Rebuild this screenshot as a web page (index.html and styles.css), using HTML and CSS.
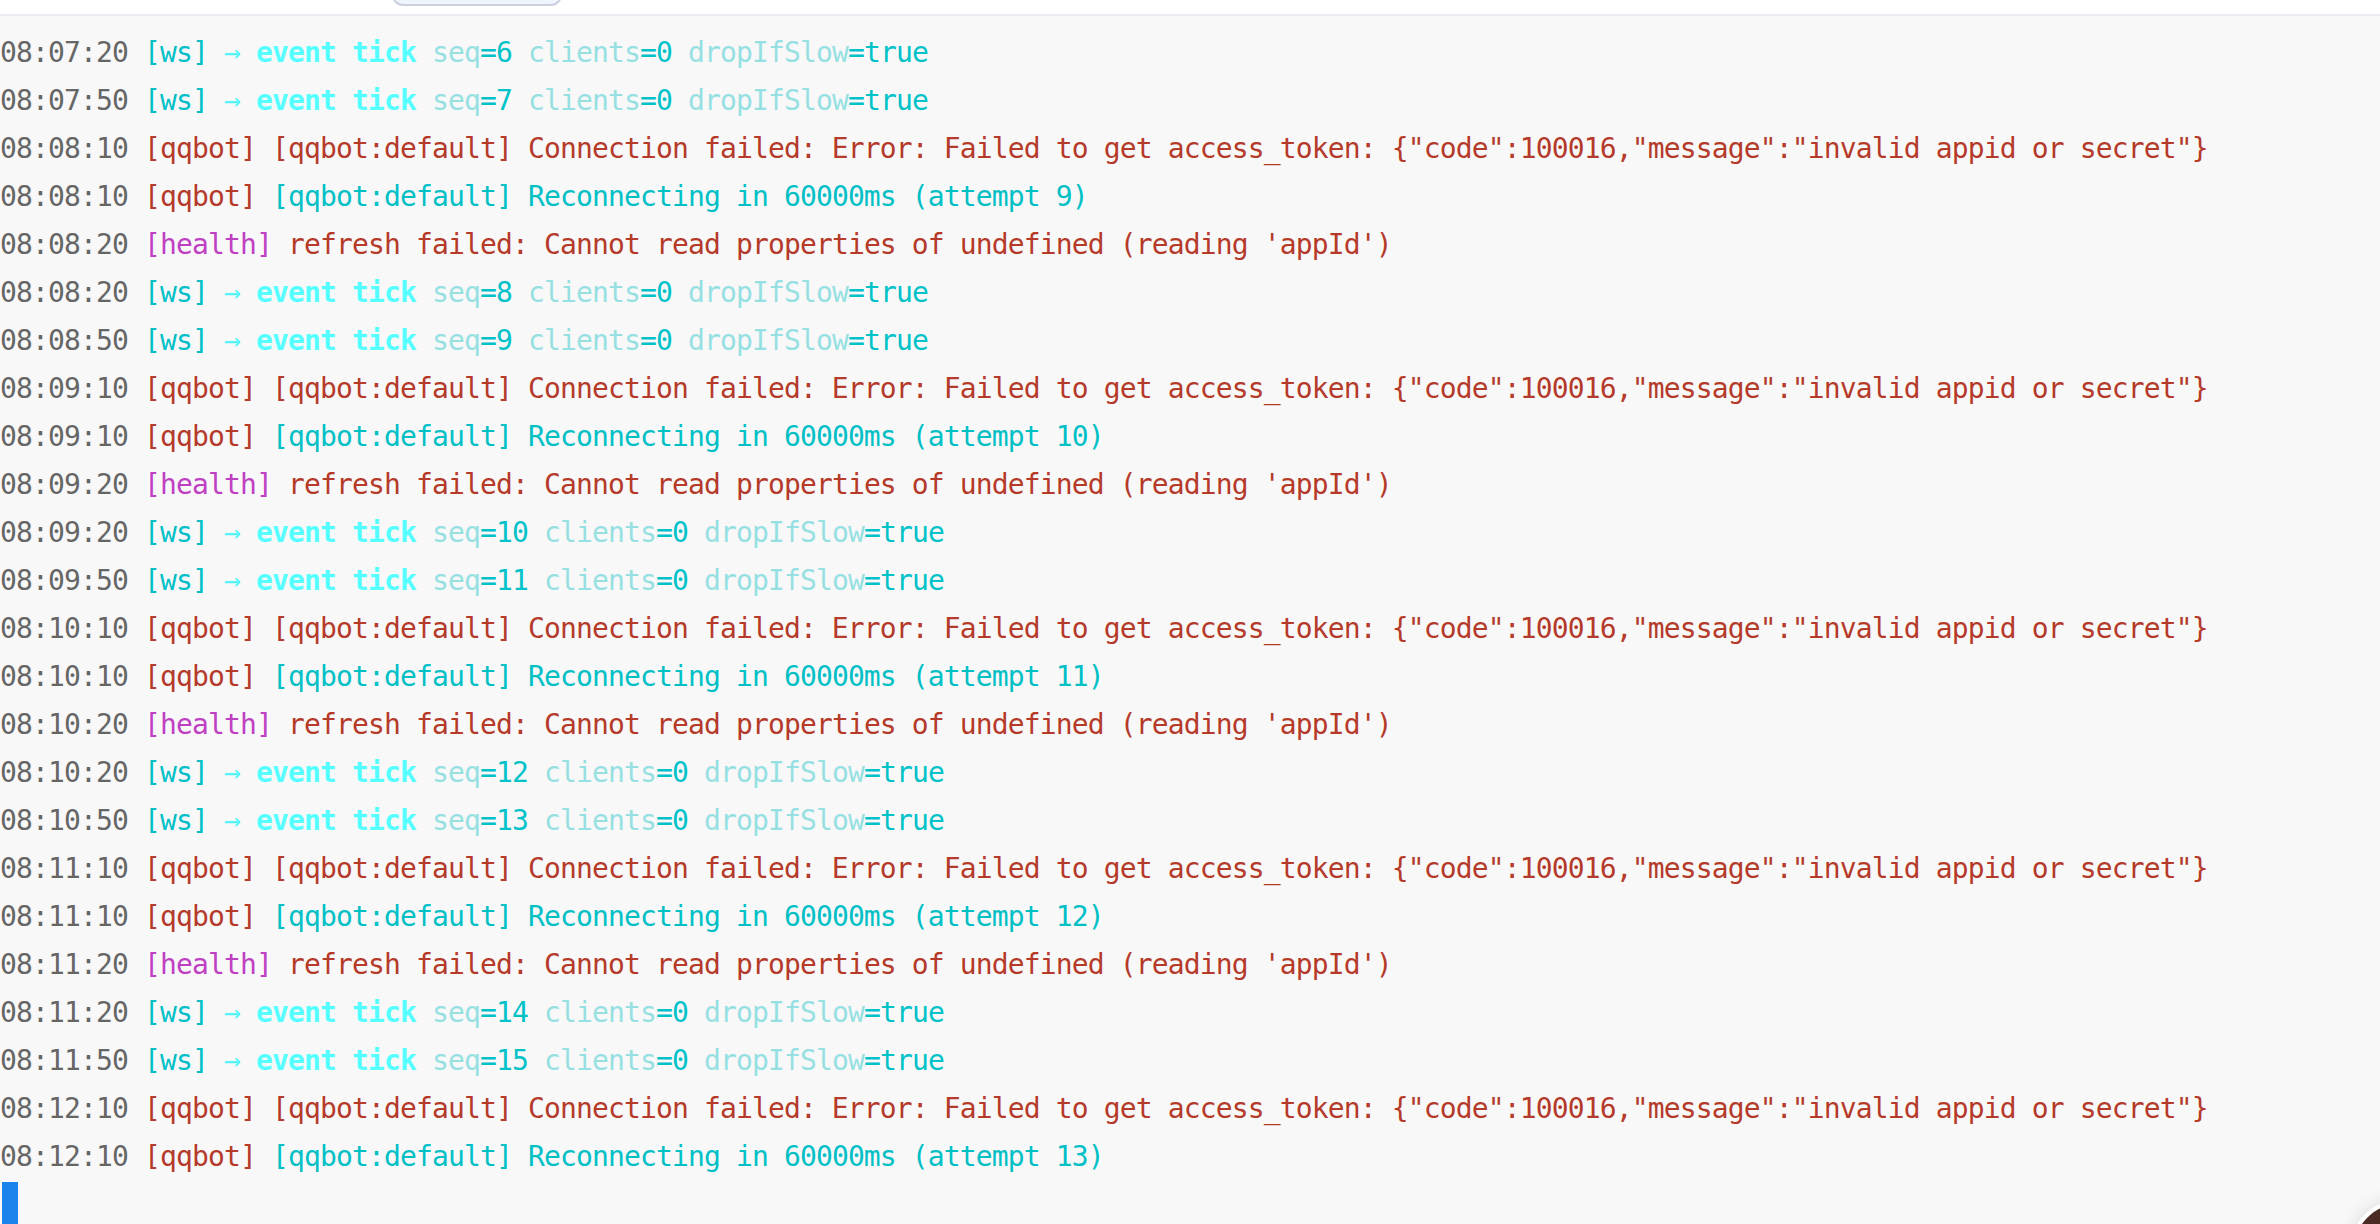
FILE: index.html
```html
<!DOCTYPE html>
<html>
<head>
<meta charset="utf-8">
<link rel="stylesheet" href="styles.css">
</head>
<body>
<div class="topbar"><div class="tab"></div></div>
<div class="log">
<div class="line"><span class="ts">08:07:20</span> <span class="ws">[ws]</span> <span class="arrow">→</span> <span class="ev">event tick</span> <span class="dim">seq</span><span class="val">=6</span> <span class="dim">clients</span><span class="val">=0</span> <span class="dim">dropIfSlow</span><span class="val">=true</span></div>
<div class="line"><span class="ts">08:07:50</span> <span class="ws">[ws]</span> <span class="arrow">→</span> <span class="ev">event tick</span> <span class="dim">seq</span><span class="val">=7</span> <span class="dim">clients</span><span class="val">=0</span> <span class="dim">dropIfSlow</span><span class="val">=true</span></div>
<div class="line"><span class="ts">08:08:10</span> <span class="red">[qqbot] [qqbot:default] Connection failed: Error: Failed to get access_token: {"code":100016,"message":"invalid appid or secret"}</span></div>
<div class="line"><span class="ts">08:08:10</span> <span class="red">[qqbot]</span> <span class="teal">[qqbot:default] Reconnecting in 60000ms (attempt 9)</span></div>
<div class="line"><span class="ts">08:08:20</span> <span class="mag">[health]</span> <span class="red">refresh failed: Cannot read properties of undefined (reading 'appId')</span></div>
<div class="line"><span class="ts">08:08:20</span> <span class="ws">[ws]</span> <span class="arrow">→</span> <span class="ev">event tick</span> <span class="dim">seq</span><span class="val">=8</span> <span class="dim">clients</span><span class="val">=0</span> <span class="dim">dropIfSlow</span><span class="val">=true</span></div>
<div class="line"><span class="ts">08:08:50</span> <span class="ws">[ws]</span> <span class="arrow">→</span> <span class="ev">event tick</span> <span class="dim">seq</span><span class="val">=9</span> <span class="dim">clients</span><span class="val">=0</span> <span class="dim">dropIfSlow</span><span class="val">=true</span></div>
<div class="line"><span class="ts">08:09:10</span> <span class="red">[qqbot] [qqbot:default] Connection failed: Error: Failed to get access_token: {"code":100016,"message":"invalid appid or secret"}</span></div>
<div class="line"><span class="ts">08:09:10</span> <span class="red">[qqbot]</span> <span class="teal">[qqbot:default] Reconnecting in 60000ms (attempt 10)</span></div>
<div class="line"><span class="ts">08:09:20</span> <span class="mag">[health]</span> <span class="red">refresh failed: Cannot read properties of undefined (reading 'appId')</span></div>
<div class="line"><span class="ts">08:09:20</span> <span class="ws">[ws]</span> <span class="arrow">→</span> <span class="ev">event tick</span> <span class="dim">seq</span><span class="val">=10</span> <span class="dim">clients</span><span class="val">=0</span> <span class="dim">dropIfSlow</span><span class="val">=true</span></div>
<div class="line"><span class="ts">08:09:50</span> <span class="ws">[ws]</span> <span class="arrow">→</span> <span class="ev">event tick</span> <span class="dim">seq</span><span class="val">=11</span> <span class="dim">clients</span><span class="val">=0</span> <span class="dim">dropIfSlow</span><span class="val">=true</span></div>
<div class="line"><span class="ts">08:10:10</span> <span class="red">[qqbot] [qqbot:default] Connection failed: Error: Failed to get access_token: {"code":100016,"message":"invalid appid or secret"}</span></div>
<div class="line"><span class="ts">08:10:10</span> <span class="red">[qqbot]</span> <span class="teal">[qqbot:default] Reconnecting in 60000ms (attempt 11)</span></div>
<div class="line"><span class="ts">08:10:20</span> <span class="mag">[health]</span> <span class="red">refresh failed: Cannot read properties of undefined (reading 'appId')</span></div>
<div class="line"><span class="ts">08:10:20</span> <span class="ws">[ws]</span> <span class="arrow">→</span> <span class="ev">event tick</span> <span class="dim">seq</span><span class="val">=12</span> <span class="dim">clients</span><span class="val">=0</span> <span class="dim">dropIfSlow</span><span class="val">=true</span></div>
<div class="line"><span class="ts">08:10:50</span> <span class="ws">[ws]</span> <span class="arrow">→</span> <span class="ev">event tick</span> <span class="dim">seq</span><span class="val">=13</span> <span class="dim">clients</span><span class="val">=0</span> <span class="dim">dropIfSlow</span><span class="val">=true</span></div>
<div class="line"><span class="ts">08:11:10</span> <span class="red">[qqbot] [qqbot:default] Connection failed: Error: Failed to get access_token: {"code":100016,"message":"invalid appid or secret"}</span></div>
<div class="line"><span class="ts">08:11:10</span> <span class="red">[qqbot]</span> <span class="teal">[qqbot:default] Reconnecting in 60000ms (attempt 12)</span></div>
<div class="line"><span class="ts">08:11:20</span> <span class="mag">[health]</span> <span class="red">refresh failed: Cannot read properties of undefined (reading 'appId')</span></div>
<div class="line"><span class="ts">08:11:20</span> <span class="ws">[ws]</span> <span class="arrow">→</span> <span class="ev">event tick</span> <span class="dim">seq</span><span class="val">=14</span> <span class="dim">clients</span><span class="val">=0</span> <span class="dim">dropIfSlow</span><span class="val">=true</span></div>
<div class="line"><span class="ts">08:11:50</span> <span class="ws">[ws]</span> <span class="arrow">→</span> <span class="ev">event tick</span> <span class="dim">seq</span><span class="val">=15</span> <span class="dim">clients</span><span class="val">=0</span> <span class="dim">dropIfSlow</span><span class="val">=true</span></div>
<div class="line"><span class="ts">08:12:10</span> <span class="red">[qqbot] [qqbot:default] Connection failed: Error: Failed to get access_token: {"code":100016,"message":"invalid appid or secret"}</span></div>
<div class="line"><span class="ts">08:12:10</span> <span class="red">[qqbot]</span> <span class="teal">[qqbot:default] Reconnecting in 60000ms (attempt 13)</span></div>
<div class="line"><span class="cursor"></span></div>
</div>
<div class="avatar"></div>
</body>
</html>
```

FILE: styles.css
```css
html, body {
  margin: 0;
  padding: 0;
  background: #f8f8f8;
  height: 100%;
  overflow: hidden;
}

.topbar {
  height: 14px;
  background: #ffffff;
  border-bottom: 2px solid #ececf3;
  display: flex;
  overflow: hidden;
}

.tab {
  margin-left: 392px;
  margin-top: -16px;
  width: 166px;
  height: 18px;
  border: 2px solid #cdd0e0;
  border-radius: 12px;
  background: #f0f4fd;
}

.log {
  padding-top: 13px;
  font-family: "DejaVu Sans Mono", "Liberation Mono", monospace;
  font-size: 28px;
  letter-spacing: -0.86px;
  line-height: 48px;
  color: #666666;
}

.line {
  height: 48px;
  white-space: pre;
}

.ts { color: #666666; }
.ws { color: #00bfc6; }
.arrow { color: #55f4f8; }
.ev { color: #55ffff; font-weight: bold; }
.dim { color: #96e0e2; }
.val { color: #00c2c8; }
.red { color: #b53a2a; }
.teal { color: #00c0c6; }
.mag { color: #c040c4; }

.cursor {
  display: inline-block;
  width: 16px;
  height: 42px;
  margin-left: 2px;
  margin-top: 1px;
  background: #1a84ec;
  vertical-align: top;
}

.avatar {
  position: fixed;
  left: 2350px;
  top: 1200px;
  width: 92px;
  height: 92px;
  border-radius: 50%;
  background: #4a2b24;
  border: 4px solid #ffffff;
  box-shadow: 0 0 18px rgba(0,0,0,0.12);
}
```
